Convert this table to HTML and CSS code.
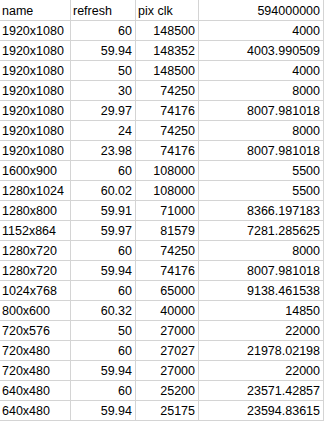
FILE: index.html
```html
<!DOCTYPE html>
<html lang="en">
<head>
    <meta charset="UTF-8">
    <title>modes</title>
    <link rel="stylesheet" href="styles.css">
</head>
<body>

<table class="sheet">
    <colgroup>
        <col class="c-name">
        <col class="c-refresh">
        <col class="c-clk">
        <col class="c-calc">
    </colgroup>
    <tr class="head">
        <td>name</td>
        <td>refresh</td>
        <td>pix clk</td>
        <td class="num">594000000</td>
    </tr>
    <tr><td>1920x1080</td><td class="num">60</td><td class="num">148500</td><td class="num">4000</td></tr>
    <tr><td>1920x1080</td><td class="num">59.94</td><td class="num">148352</td><td class="num">4003.990509</td></tr>
    <tr><td>1920x1080</td><td class="num">50</td><td class="num">148500</td><td class="num">4000</td></tr>
    <tr><td>1920x1080</td><td class="num">30</td><td class="num">74250</td><td class="num">8000</td></tr>
    <tr><td>1920x1080</td><td class="num">29.97</td><td class="num">74176</td><td class="num">8007.981018</td></tr>
    <tr><td>1920x1080</td><td class="num">24</td><td class="num">74250</td><td class="num">8000</td></tr>
    <tr><td>1920x1080</td><td class="num">23.98</td><td class="num">74176</td><td class="num">8007.981018</td></tr>
    <tr><td>1600x900</td><td class="num">60</td><td class="num">108000</td><td class="num">5500</td></tr>
    <tr><td>1280x1024</td><td class="num">60.02</td><td class="num">108000</td><td class="num">5500</td></tr>
    <tr><td>1280x800</td><td class="num">59.91</td><td class="num">71000</td><td class="num">8366.197183</td></tr>
    <tr><td>1152x864</td><td class="num">59.97</td><td class="num">81579</td><td class="num">7281.285625</td></tr>
    <tr><td>1280x720</td><td class="num">60</td><td class="num">74250</td><td class="num">8000</td></tr>
    <tr><td>1280x720</td><td class="num">59.94</td><td class="num">74176</td><td class="num">8007.981018</td></tr>
    <tr><td>1024x768</td><td class="num">60</td><td class="num">65000</td><td class="num">9138.461538</td></tr>
    <tr><td>800x600</td><td class="num">60.32</td><td class="num">40000</td><td class="num">14850</td></tr>
    <tr><td>720x576</td><td class="num">50</td><td class="num">27000</td><td class="num">22000</td></tr>
    <tr><td>720x480</td><td class="num">60</td><td class="num">27027</td><td class="num">21978.02198</td></tr>
    <tr><td>720x480</td><td class="num">59.94</td><td class="num">27000</td><td class="num">22000</td></tr>
    <tr><td>640x480</td><td class="num">60</td><td class="num">25200</td><td class="num">23571.42857</td></tr>
    <tr><td>640x480</td><td class="num">59.94</td><td class="num">25175</td><td class="num">23594.83615</td></tr>
</table>

</body>
</html>
```
FILE: styles.css
```css
body {
    margin: 0;
    padding: 0;
    background-color: #ffffff;
    font-family: "Liberation Sans", Arial, sans-serif;
    font-size: 12.5px;
    color: #000000;
}
.sheet {
    border-collapse: separate;
    border-spacing: 0;
    table-layout: fixed;
    width: 324px;
}
.c-name {
    width: 71px;
}
.c-refresh {
    width: 65px;
}
.c-clk {
    width: 63px;
}
.c-calc {
    width: 125px;
}
.sheet td {
    box-sizing: border-box;
    height: 20px;
    padding: 2px 3px 0 2px;
    line-height: 17px;
    border-right: 1px solid #d4d4d4;
    border-bottom: 1px solid #d4d4d4;
    white-space: nowrap;
    overflow: hidden;
    vertical-align: top;
}
.sheet .head td {
    height: 21px;
    padding-top: 3px;
}
.sheet td.num {
    text-align: right;
}
```
